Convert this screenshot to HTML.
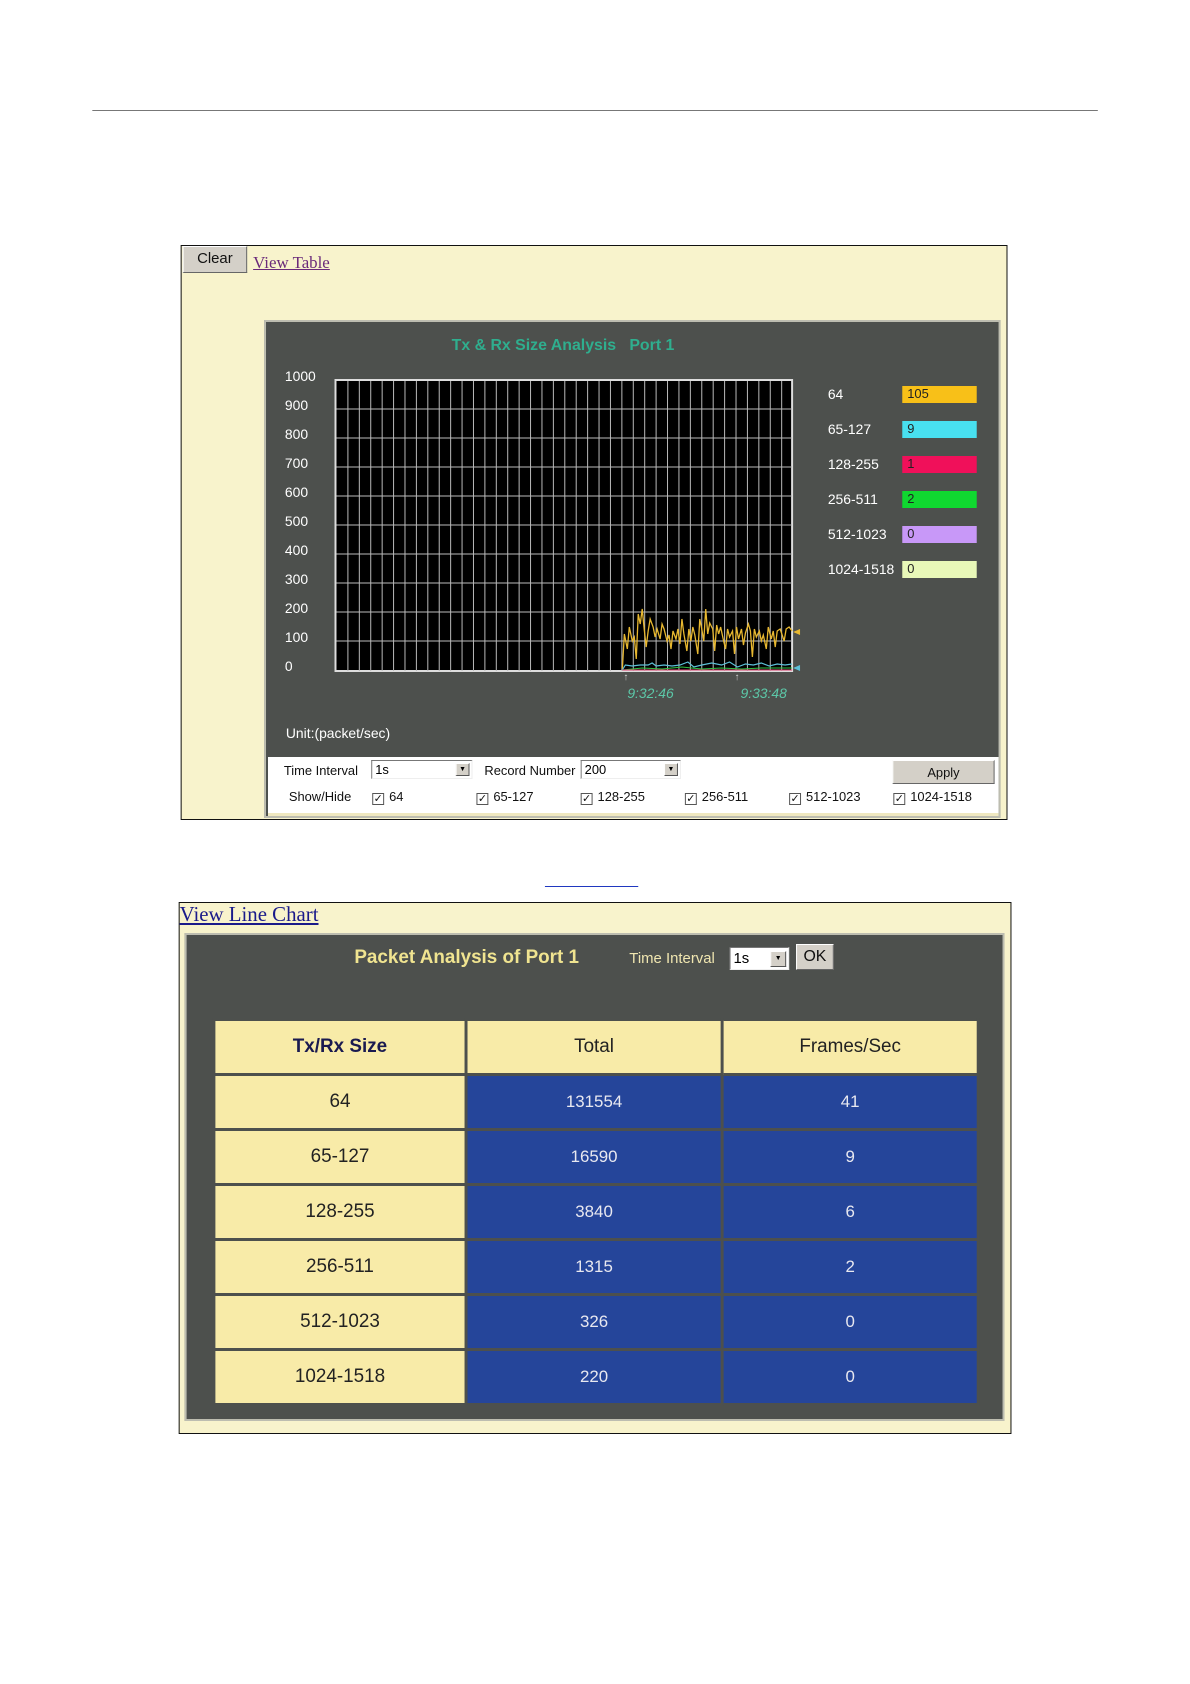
<!DOCTYPE html>
<html><head><meta charset="utf-8"><style>
*{margin:0;padding:0;box-sizing:border-box}
body{width:1190px;height:1684px;background:#fff;position:relative;font-family:"Liberation Sans",Arial,sans-serif;overflow:hidden}
#w{position:absolute;left:0;top:0;width:1190px;height:1684px;transform:scale(0.9926,1);transform-origin:0 0}
.a{position:absolute}
.hr{left:93px;top:110px;width:1013px;height:1px;background:#777}
.p1{left:182px;top:245px;width:833px;height:575px;border:1px solid #111;background:#f8f3cc}
.btn{background:#d4d0c8;border:1px solid;border-color:#fff #666 #666 #fff;font-size:15px;color:#111;text-align:center}
.lnk{font-family:"Liberation Serif",serif;text-decoration:underline}
.g1{left:266px;top:320px;width:742px;height:498px;background:#4d504d;border:2px solid #bdbdb0}
.t{color:#fff;font-size:14px}
.sel{background:#fff;border:1px solid;border-color:#777 #eee #eee #777;font-size:13px;padding-left:3px;line-height:17px}
.sel i{position:absolute;right:2px;top:2px;width:14px;height:13px;background:#d4d0c8;border:1px solid;border-color:#fff #555 #555 #fff;font-style:normal;font-size:7px;text-align:center;line-height:11px}
.cb{font-size:13px;color:#111}
.cb b{display:inline-block;width:12px;height:12px;border:1px solid #555;background:#fff;font-size:11px;line-height:10px;text-align:center;margin-right:5px;vertical-align:-1px;font-weight:normal}
.p2{left:180px;top:902px;width:839px;height:532px;border:1px solid #111;background:#f8f3cc}
.g2{left:186px;top:933px;width:826px;height:488px;background:#4d504d;border:2px solid #bdbdb0}
table{position:absolute;left:214px;top:1018px;border-collapse:collapse}
td{height:55px;text-align:center;font-size:19px;border:3px solid #4d504d;padding:0}
td.y{background:#f8eba8;color:#222;width:254px}
td.b{background:#25459a;color:#e8e8f0;font-size:17px;width:258px}
</style></head><body><div id="w">
<div class="a hr"></div>

<div class="a p1"></div>
<div class="a btn" style="left:184px;top:246px;width:65px;height:27px;line-height:24px">Clear</div>
<div class="a lnk" style="left:255px;top:253px;font-size:17px;color:#6a2a7a">View Table</div>
<div class="a g1"></div>
<div class="a" style="left:455px;top:337px;color:#2fae8e;font-weight:bold;font-size:16px;white-space:nowrap">Tx &amp; Rx Size Analysis &nbsp; Port 1</div>
<div class="a t" style="left:287px;top:362px;line-height:29px">1000<br>900<br>800<br>700<br>600<br>500<br>400<br>300<br>200<br>100<br>0</div>
<svg class="a" style="left:337px;top:379px" width="475" height="300">
<rect x="1" y="1" width="460" height="291" fill="#000" stroke="#ddd" stroke-width="2"/>
<g stroke="#bbb" stroke-width="1">
<path d="M13.5 2V292M25 2V292M36.5 2V292M48 2V292M59.5 2V292M71 2V292M82.5 2V292M94 2V292M105.5 2V292M117 2V292M128.5 2V292M140 2V292M151.5 2V292M163 2V292M174.5 2V292M186 2V292M197.5 2V292M209 2V292M220.5 2V292M232 2V292M243.5 2V292M255 2V292M266.5 2V292M278 2V292M289.5 2V292M301 2V292M312.5 2V292M324 2V292M335.5 2V292M347 2V292M358.5 2V292M370 2V292M381.5 2V292M393 2V292M404.5 2V292M416 2V292M427.5 2V292M439 2V292M450.5 2V292"/>
<path d="M2 30H461M2 59H461M2 88H461M2 117H461M2 146H461M2 175H461M2 204H461M2 233H461M2 262H461"/>
</g>
<polyline fill="none" stroke="#e8b830" stroke-width="1.3" points="290,290 292,255 295,270 297,248 300,262 302,258 304,280 306,235 308,245 310,230 312,250 314,268 316,252 318,240 321,248 323,258 325,250 328,260 330,245 332,250 335,262 337,256 339,270 341,252 344,260 346,250 348,265 350,240 352,255 355,272 357,250 359,262 361,248 363,256 366,275 368,240 370,250 372,262 374,230 376,255 378,244 381,250 383,272 385,246 387,255 389,248 392,262 394,270 396,250 398,258 401,252 403,275 405,248 407,260 410,250 412,266 414,254 417,245 419,252 421,278 423,250 425,258 428,252 430,262 432,256 435,270 437,248 440,260 442,252 444,268 446,252 449,250 451,256 453,262 455,250 458,248 461,252"/>
<polyline fill="none" stroke="#5cc0d8" stroke-width="1.2" points="290,291 293,286 300,287 308,286 316,286 320,284 324,287 332,286 340,287 348,286 356,283 362,288 370,286 380,284 390,286 398,283 406,288 414,285 422,286 430,284 438,287 446,285 454,286 461,285"/>
<polyline fill="none" stroke="#30c040" stroke-width="1" points="290,291 310,289 330,290 350,288 370,290 390,289 410,290 430,289 461,289"/>
<polyline fill="none" stroke="#e04070" stroke-width="1" points="290,291 461,291"/>
<polygon points="462,253 469,250 469,256" fill="#e8b830"/>
<polygon points="462,289 469,286 469,292" fill="#5cc0d8"/>
</svg>
<div class="a" style="left:628px;top:672px;color:#ccc;font-size:10px">↑</div>
<div class="a" style="left:740px;top:672px;color:#ccc;font-size:10px">↑</div>
<div class="a" style="left:632px;top:685px;color:#5cc8a8;font-size:14px;font-style:italic">9:32:46</div>
<div class="a" style="left:746px;top:685px;color:#5cc8a8;font-size:14px;font-style:italic">9:33:48</div>
<div class="a t" style="left:288px;top:725px">Unit:(packet/sec)</div>

<div class="a t" style="left:834px;top:386px">64</div>
<div class="a t" style="left:834px;top:421px">65-127</div>
<div class="a t" style="left:834px;top:456px">128-255</div>
<div class="a t" style="left:834px;top:491px">256-511</div>
<div class="a t" style="left:834px;top:526px">512-1023</div>
<div class="a t" style="left:834px;top:561px">1024-1518</div>
<div class="a" style="left:909px;top:386px;width:75px;height:17px;background:#f8c018;font-size:13px;padding-left:5px;color:#222">105</div>
<div class="a" style="left:909px;top:421px;width:75px;height:17px;background:#48e0f0;font-size:13px;padding-left:5px;color:#222">9</div>
<div class="a" style="left:909px;top:456px;width:75px;height:17px;background:#f0105a;font-size:13px;padding-left:5px;color:#222">1</div>
<div class="a" style="left:909px;top:491px;width:75px;height:17px;background:#10d830;font-size:13px;padding-left:5px;color:#222">2</div>
<div class="a" style="left:909px;top:526px;width:75px;height:17px;background:#c898f8;font-size:13px;padding-left:5px;color:#222">0</div>
<div class="a" style="left:909px;top:561px;width:75px;height:17px;background:#e8f8b8;font-size:13px;padding-left:5px;color:#222">0</div>

<div class="a" style="left:270px;top:757px;width:736px;height:59px;background:#fff;border-bottom:3px solid #efe8c0"></div>
<div class="a cb" style="left:286px;top:763px">Time Interval</div>
<div class="a sel" style="left:374px;top:760px;width:102px;height:19px">1s<i>▼</i></div>
<div class="a cb" style="left:488px;top:763px">Record Number</div>
<div class="a sel" style="left:585px;top:760px;width:101px;height:19px">200<i>▼</i></div>
<div class="a btn" style="left:899px;top:760px;width:103px;height:24px;font-size:13px;line-height:24px">Apply</div>
<div class="a cb" style="left:291px;top:789px">Show/Hide</div>
<div class="a cb" style="left:375px;top:789px"><b>✓</b>64</div>
<div class="a cb" style="left:480px;top:789px"><b>✓</b>65-127</div>
<div class="a cb" style="left:585px;top:789px"><b>✓</b>128-255</div>
<div class="a cb" style="left:690px;top:789px"><b>✓</b>256-511</div>
<div class="a cb" style="left:795px;top:789px"><b>✓</b>512-1023</div>
<div class="a cb" style="left:900px;top:789px"><b>✓</b>1024-1518</div>

<div class="a" style="left:549px;top:886px;width:94px;height:1px;background:#2038c0"></div>

<div class="a p2"></div>
<div class="a lnk" style="left:181px;top:902px;font-size:21px;color:#1a1a8a">View Line Chart</div>
<div class="a g2"></div>
<div class="a" style="left:357px;top:947px;color:#f0e490;font-weight:bold;font-size:19px">Packet Analysis of Port 1</div>
<div class="a" style="left:634px;top:950px;color:#f0e6b0;font-size:15px">Time Interval</div>
<div class="a sel" style="left:735px;top:947px;width:60px;height:23px;font-size:15px;line-height:21px">1s<i style="top:3px;width:16px;height:16px;line-height:14px">▼</i></div>
<div class="a btn" style="left:802px;top:944px;width:38px;height:26px;font-size:16px;line-height:24px">OK</div>

<table>
<tr><td class="y" style="font-weight:bold;color:#1a1a50">Tx/Rx Size</td><td class="y">Total</td><td class="y">Frames/Sec</td></tr>
<tr><td class="y">64</td><td class="b">131554</td><td class="b">41</td></tr>
<tr><td class="y">65-127</td><td class="b">16590</td><td class="b">9</td></tr>
<tr><td class="y">128-255</td><td class="b">3840</td><td class="b">6</td></tr>
<tr><td class="y">256-511</td><td class="b">1315</td><td class="b">2</td></tr>
<tr><td class="y">512-1023</td><td class="b">326</td><td class="b">0</td></tr>
<tr><td class="y">1024-1518</td><td class="b">220</td><td class="b">0</td></tr>
</table>
</div></body></html>
